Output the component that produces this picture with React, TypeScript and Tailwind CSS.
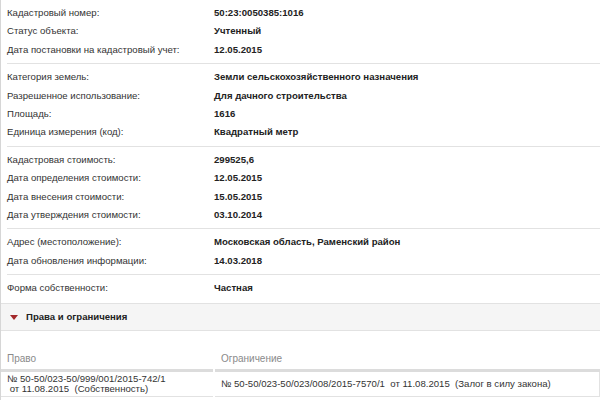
const groups: [string, string][][] = [
  [
    ["Кадастровый номер:", "50:23:0050385:1016"],
    ["Статус объекта:", "Учтенный"],
    ["Дата постановки на кадастровый учет:", "12.05.2015"],
  ],
  [
    ["Категория земель:", "Земли сельскохозяйственного назначения"],
    ["Разрешенное использование:", "Для дачного строительства"],
    ["Площадь:", "1616"],
    ["Единица измерения (код):", "Квадратный метр"],
  ],
  [
    ["Кадастровая стоимость:", "299525,6"],
    ["Дата определения стоимости:", "12.05.2015"],
    ["Дата внесения стоимости:", "15.05.2015"],
    ["Дата утверждения стоимости:", "03.10.2014"],
  ],
  [
    ["Адрес (местоположение):", "Московская область, Раменский район"],
    ["Дата обновления информации:", "14.03.2018"],
  ],
];

function Row({ label, value }: { label: string; value: string }) {
  return (
    <div className="flex h-[18.4px] items-center">
      <div className="w-[207px] shrink-0 text-[#333]">{label}</div>
      <div className="font-bold text-[#222]">{value}</div>
    </div>
  );
}

export default function App() {
  return (
    <div
      className="h-[400px] w-[600px] overflow-hidden border-l border-[#d6d6d6] bg-white text-[9.6px]"
      style={{ fontFamily: '"Liberation Sans", Arial, sans-serif' }}
    >
      {groups.map((rows, i) => (
        <div key={i} className="ml-[6px] border-b border-[#e2e2e2] pb-1 pt-1">
          {rows.map(([l, v]) => (
            <Row key={l} label={l} value={v} />
          ))}
        </div>
      ))}
      <div className="ml-[6px] pb-[6px] pt-1">
        <Row label="Форма собственности:" value="Частная" />
      </div>

      <div className="flex h-[28px] items-center gap-[8px] border-y border-[#e2e2e2] bg-[#f5f5f5] pl-[9px]">
        <svg width="8" height="5" viewBox="0 0 8 5">
          <path d="M0 0 H8 L4 5 Z" fill="#a3282a" />
        </svg>
        <span className="font-bold text-[#222]">Права и ограничения</span>
      </div>

      <div className="mt-[22px] grid grid-cols-[212px_1fr] gap-x-[2px]">
        <div className="border-b-[3px] border-[#dcdcdc] pb-[4px] pl-[6px] text-[10px] leading-[12px] text-[#8a8a8a]">
          Право
        </div>
        <div className="border-b-[3px] border-[#dcdcdc] pb-[4px] pl-[6px] text-[10px] leading-[12px] text-[#8a8a8a]">
          Ограничение
        </div>
        <div className="border-b border-[#e2e2e2] py-[2px] pl-[6px] leading-[10px] text-[#333]">
          <div>№ 50-50/023-50/999/001/2015-742/1</div>
          <div className="whitespace-pre"> от 11.08.2015  (Собственность)</div>
        </div>
        <div className="flex items-center whitespace-pre border-b border-r border-[#e2e2e2] pl-[6px] text-[#333]">
          № 50-50/023-50/023/008/2015-7570/1  от 11.08.2015  (Залог в силу закона)
        </div>
      </div>
    </div>
  );
}
